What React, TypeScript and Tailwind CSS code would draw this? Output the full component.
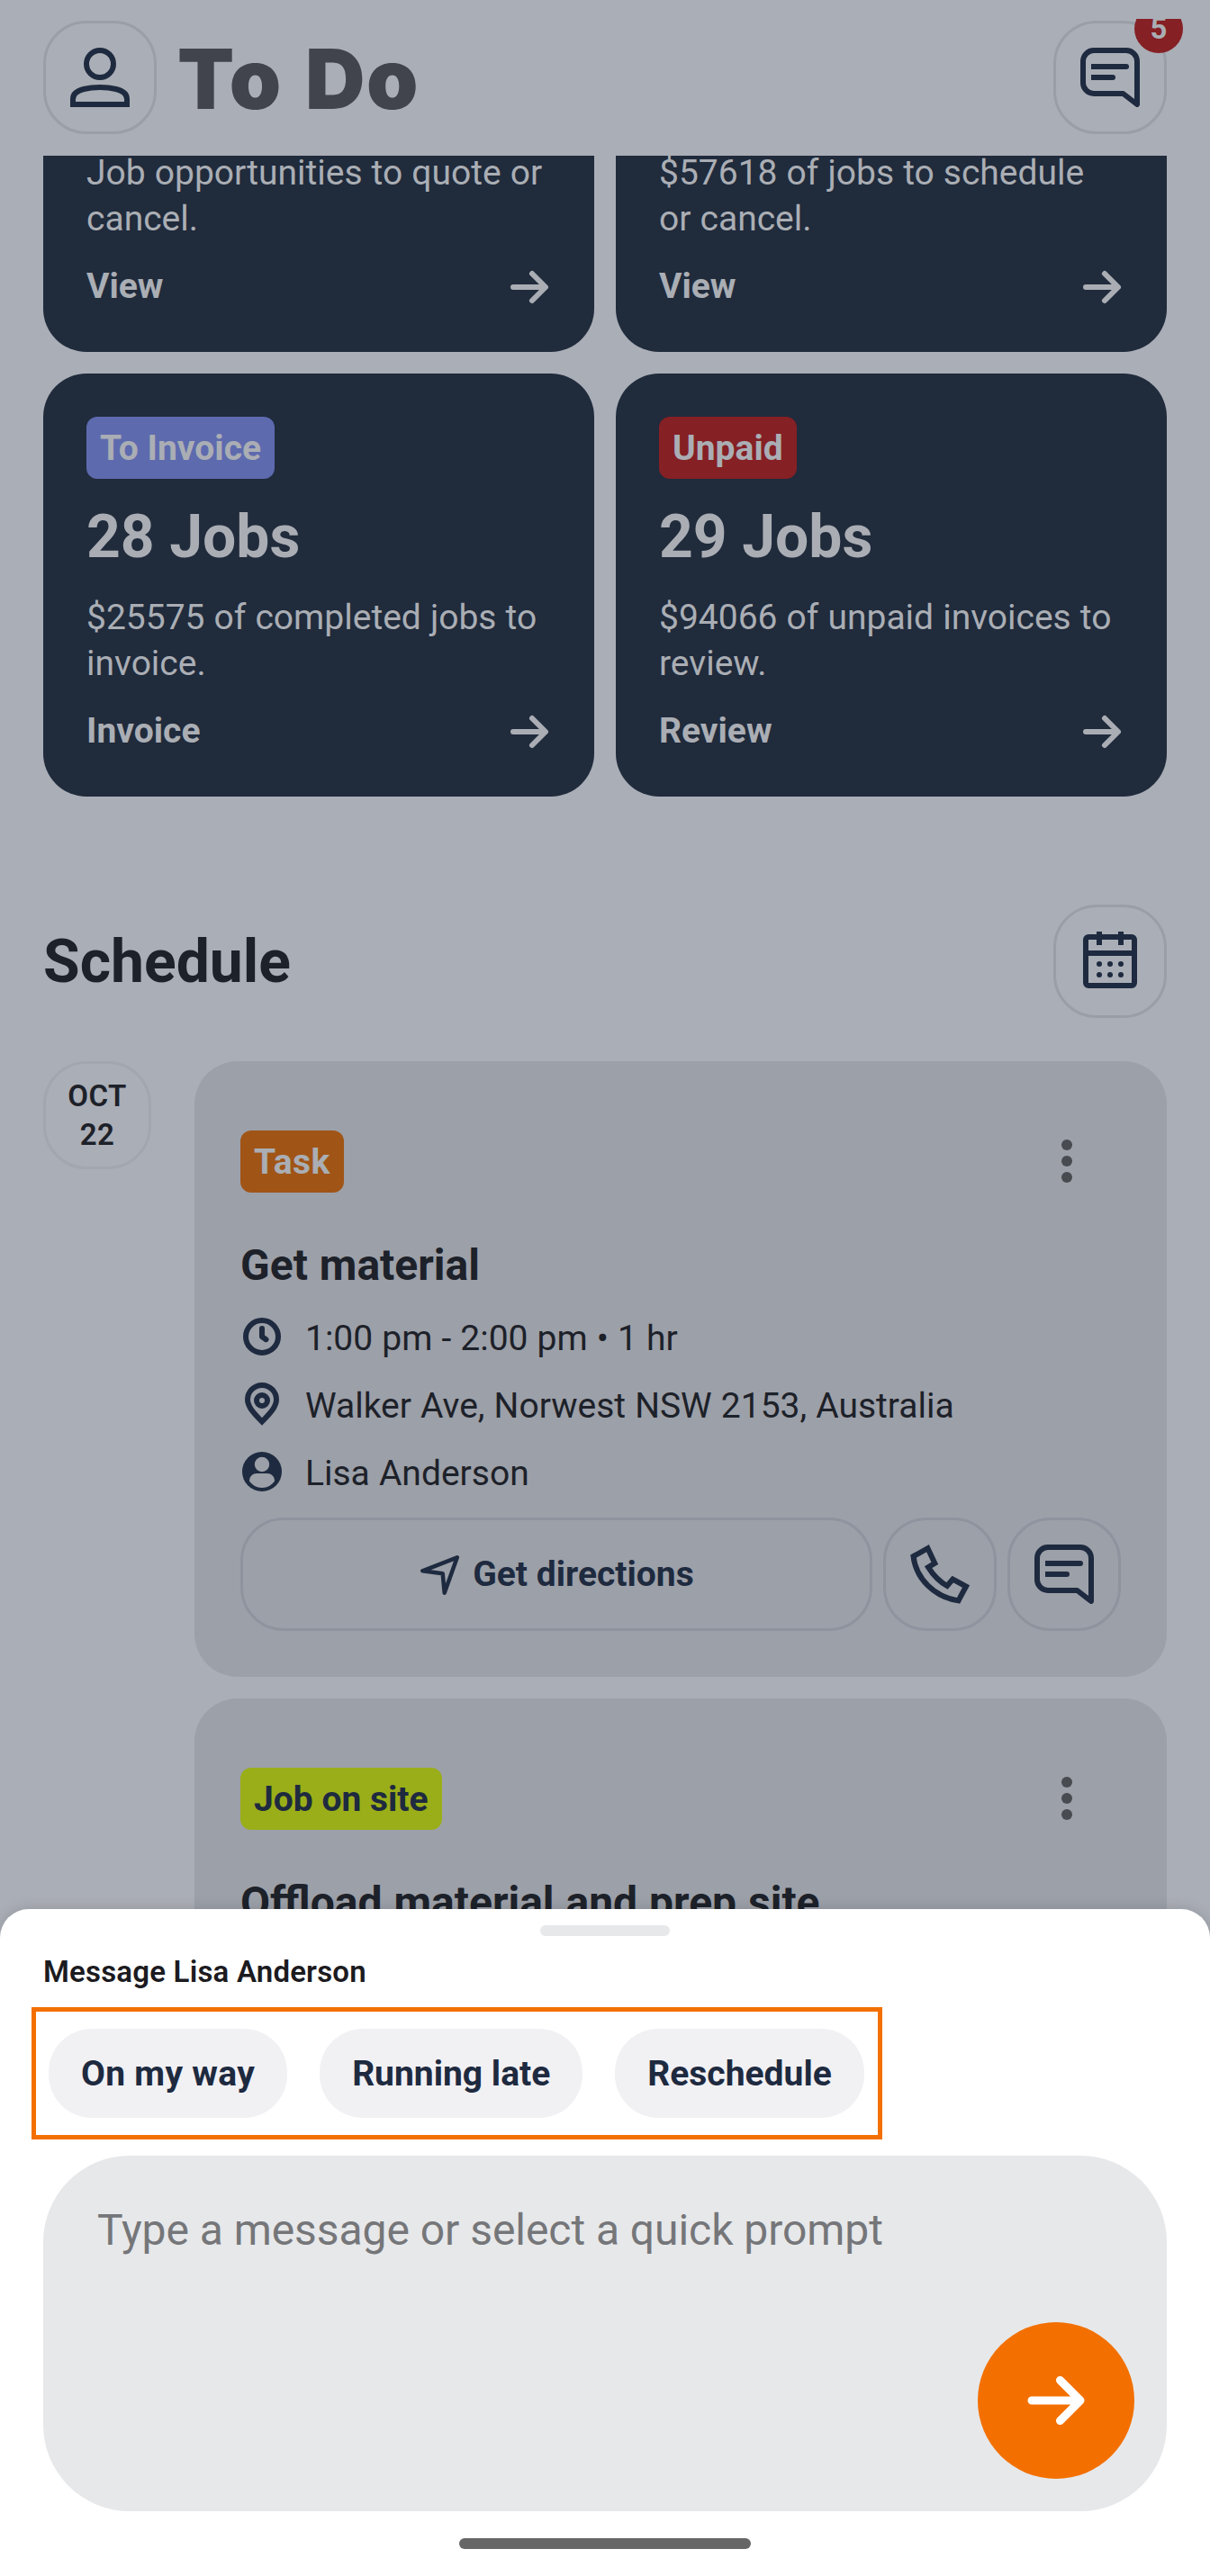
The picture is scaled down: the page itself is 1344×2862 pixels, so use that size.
import type { ReactNode } from "react";

function ArrowRight({ className }: { className: string }) {
  return (
    <svg viewBox="0 0 48 48" className={className} fill="none" stroke="currentColor" strokeWidth="6" strokeLinecap="round" strokeLinejoin="round">
      <path d="M6 24H41M27 9L42 24L27 39" />
    </svg>
  );
}

function PersonIcon() {
  return (
    <svg viewBox="0 0 66 66" className="size-[66px]" fill="none" stroke="currentColor" strokeWidth="6">
      <circle cx="33" cy="18" r="15" />
      <path d="M3 63V57C3 50.500 9 47.500 15 46C21 44.500 27 44 33 44C39 44 45 44.500 51 46C57 47.500 63 50.500 63 57V63Z" />
    </svg>
  );
}

function MessageIcon() {
  return (
    <svg viewBox="0 0 66 66" className="size-[66px]" fill="none" stroke="currentColor" strokeWidth="6">
      <path strokeLinejoin="round" d="M63 63V15A12 12 0 0 0 51 3H15A12 12 0 0 0 3 15V39A12 12 0 0 0 15 51H47.500Z" />
      <path d="M12 21H51M12 33H36" />
      <path strokeLinecap="round" d="M48 21H51M33 33H36" />
    </svg>
  );
}

function PhoneIcon() {
  return (
    <svg viewBox="0 0 66 66" className="size-[66px]" fill="none" stroke="currentColor" strokeWidth="6">
      <path d="M3.500 13.200L19.500 4.200L27.300 20.800L20 25.200C25.500 34 32 41 41 46L47.300 38.600L62 46.500L53.500 62.400C27 58.500 6.500 38 3.500 13.200Z" />
    </svg>
  );
}

function CalendarIcon() {
  return (
    <svg viewBox="0 0 60 63" className="-mt-[3px] h-[63px] w-[60px]" fill="none" stroke="currentColor" strokeWidth="6">
      <rect x="3" y="6" width="54" height="54" rx="3" />
      <path d="M3 24H57M18 0V15M42 0V15" />
      <g fill="currentColor" stroke="none">
        {[36, 48].map((y) => [18, 30, 42].map((x) => <circle key={`${x}-${y}`} cx={x} cy={y} r="3" />))}
      </g>
    </svg>
  );
}

function ClockIcon() {
  return (
    <svg viewBox="0 0 48 48" className="size-12" fill="none" stroke="currentColor" strokeWidth="6">
      <circle cx="24" cy="24" r="18" />
      <path d="M24 15V24L28.500 27.200" strokeLinecap="round" strokeLinejoin="round" />
    </svg>
  );
}

function PinIcon() {
  return (
    <svg viewBox="0 0 48 48" className="size-12" fill="none" stroke="currentColor" strokeWidth="6">
      <path d="M24 43.500C15 34 8 27 8 19A16 16 0 0 1 40 19C40 27 33 34 24 43.500Z" />
      <circle cx="24" cy="20" r="6" />
    </svg>
  );
}

function AccountIcon() {
  return (
    <svg viewBox="0 0 48 48" className="size-12">
      <circle cx="24" cy="24" r="22" fill="currentColor" />
      <circle cx="24" cy="16" r="8.200" fill="#9ca0a8" />
      <path fill="#9ca0a8" d="M10 34.500C10 29 14 26 18 26H30C34 26 38 29 38 34.500C35 39 30 42 24 42C18 42 13 39 10 34.500Z" />
    </svg>
  );
}

function DirectionsIcon() {
  return (
    <svg viewBox="0 0 48 48" className="size-12" fill="none" stroke="currentColor" strokeWidth="4.500" strokeLinejoin="round">
      <path d="M42.800 5.300L4.300 20.300L26.700 23.300L28.700 44.700Z" />
    </svg>
  );
}

function RoundButton({ children, className }: { children: ReactNode; className: string }) {
  return (
    <button className={`flex size-[126px] shrink-0 items-center justify-center rounded-[48px] border-3 text-[#1e2a3f] ${className}`}>
      {children}
    </button>
  );
}

function Badge({ label, className }: { label: string; className: string }) {
  return (
    <span className={`flex h-[69px] w-fit items-center rounded-xl px-[15px] pt-0.5 text-[39px] leading-[51px] font-bold ${className}`}>
      {label}
    </span>
  );
}

function CardAction({ label }: { label: string }) {
  return (
    <div className="mt-6 flex h-[51px] items-center justify-between">
      <span className="font-bold">{label}</span>
      <ArrowRight className="mt-px size-12" />
    </div>
  );
}

function ScrolledCard({ children, action }: { children: ReactNode; action: string }) {
  return (
    <article className="h-[218px] rounded-b-[48px] bg-[#202b3c] px-12 text-[39px] leading-[51px] text-[#aaaeb4]">
      <p className="-mt-1.5 [word-spacing:0.4px]">{children}</p>
      <CardAction label={action} />
    </article>
  );
}

function JobCard({ tag, tagClass, count, text, action }: { tag: string; tagClass: string; count: string; text: string; action: string }) {
  return (
    <article className="h-[470px] rounded-[48px] bg-[#202b3c] p-12 text-[39px] leading-[51px] text-[#aaaeb4]">
      <Badge label={tag} className={tagClass} />
      <h2 className="mt-[25px] text-[66px] leading-[79px] font-bold">{count}</h2>
      <p className="mt-[25px] [word-spacing:0.4px]">{text}</p>
      <CardAction label={action} />
    </article>
  );
}

function TaskHeader({ tag, tagClass, title }: { tag: string; tagClass: string; title: string }) {
  return (
    <>
      <div className="flex h-[120px] items-center justify-between">
        <Badge label={tag} className={tagClass} />
        <button className="flex size-[120px] flex-col items-center justify-center gap-1.5">
          <i className="size-3 rounded-full bg-[#484b4f]" />
          <i className="size-3 rounded-full bg-[#484b4f]" />
          <i className="size-3 rounded-full bg-[#484b4f]" />
        </button>
      </div>
      <h3 className="mt-6 text-[48px] leading-[63px] font-bold [word-spacing:1px]">{title}</h3>
    </>
  );
}

function InfoRow({ icon, text }: { icon: ReactNode; text: string }) {
  return (
    <div className="flex h-[51px] items-center gap-6">
      <span className="-mt-[5px] text-[#1e2a3f]">{icon}</span>
      <span className="[word-spacing:0.4px]">{text}</span>
    </div>
  );
}

const prompts = [
  { label: "On my way", tracking: "tracking-[0.3px]" },
  { label: "Running late", tracking: "tracking-normal" },
  { label: "Reschedule", tracking: "tracking-normal" },
];

export default function App() {
  return (
    <div className="relative h-[2862px] w-[1344px] overflow-hidden bg-[#aaaeb6] font-['Roboto',sans-serif] text-[#1d2129]">
      <div className="pt-[21px]">
        <header className="flex h-[152px] items-start justify-between overflow-hidden px-12 pt-0.5">
          <div className="flex items-start gap-[23px]">
            <RoundButton className="border-[#9a9ea7]">
              <PersonIcon />
            </RoundButton>
            <h1 className="pt-0.5 font-['Inter',sans-serif] text-[92px] leading-[126px] font-black tracking-[1.7px] text-[#41444d] [word-spacing:5px]">To Do</h1>
          </div>
          <div className="relative">
            <RoundButton className="border-[#9a9ea7]">
              <MessageIcon />
            </RoundButton>
            <span className="absolute -top-[18px] -right-[18px] flex size-[54px] items-center justify-center rounded-full bg-[#852025] text-[33px] font-bold text-[#aaaeb4]">
              5
            </span>
          </div>
        </header>

        <main className="px-12">
          <section className="grid grid-cols-2 gap-6">
            <ScrolledCard action="View">Job opportunities to quote or cancel.</ScrolledCard>
            <ScrolledCard action="View">
              $57618 of jobs to schedule
              <br />
              or cancel.
            </ScrolledCard>
            <JobCard tag="To Invoice" tagClass="bg-[#5e6aae] text-[#aaaeb4]" count="28 Jobs" text="$25575 of completed jobs to invoice." action="Invoice" />
            <JobCard tag="Unpaid" tagClass="bg-[#852025] text-[#aaaeb4]" count="29 Jobs" text="$94066 of unpaid invoices to review." action="Review" />
          </section>

          <section className="mt-[120px]">
            <div className="flex items-center justify-between">
              <h2 className="pt-0.5 text-[66px] leading-[78px] font-bold">Schedule</h2>
              <RoundButton className="border-[#9a9ea7]">
                <CalendarIcon />
              </RoundButton>
            </div>

            <div className="mt-12 flex items-start gap-12">
              <div className="flex size-[120px] shrink-0 flex-col items-center rounded-[48px] border-3 border-[#a2a6ae] pt-[14px] text-[33px] leading-[43px] font-semibold tracking-[0.4px]">
                <span>OCT</span>
                <span>22</span>
              </div>

              <div className="flex flex-1 flex-col gap-6">
                <article className="h-[684px] rounded-[48px] bg-[#9ca0a8] p-[51px]">
                  <TaskHeader tag="Task" tagClass="bg-[#a05517] text-[#aaaeb4] tracking-[0.4px]" title="Get material" />
                  <div className="mt-[25px] flex flex-col gap-6 text-[39px] leading-[51px]">
                    <InfoRow icon={<ClockIcon />} text="1:00 pm - 2:00 pm • 1 hr" />
                    <InfoRow icon={<PinIcon />} text="Walker Ave, Norwest NSW 2153, Australia" />
                    <InfoRow icon={<AccountIcon />} text="Lisa Anderson" />
                  </div>
                  <div className="mt-[23px] flex gap-3">
                    <button className="flex h-[126px] flex-1 items-center justify-center gap-3 rounded-[48px] border-3 border-[#8f939e] text-[39px] font-bold text-[#1e2a3f]">
                      <DirectionsIcon />
                      Get directions
                    </button>
                    <RoundButton className="border-[#8f939e]">
                      <PhoneIcon />
                    </RoundButton>
                    <RoundButton className="border-[#8f939e]">
                      <MessageIcon />
                    </RoundButton>
                  </div>
                </article>

                <article className="h-[684px] rounded-[48px] bg-[#9ca0a8] p-[51px]">
                  <TaskHeader tag="Job on site" tagClass="bg-[#9aae19] text-[#1e2a3f]" title="Offload material and prep site" />
                </article>
              </div>
            </div>
          </section>
        </main>
      </div>

      <section className="absolute inset-x-0 bottom-0 h-[741px] rounded-t-[32px] bg-white pt-[18px] shadow-[0_0_16px_rgba(0,0,0,0.15)]">
        <div className="mx-auto h-3 w-36 rounded-full bg-[#e7e8ea]" />
        <h4 className="mt-[18px] ml-12 text-[33px] leading-[43px] font-semibold tracking-[0.2px] text-[#1c1b1f]">Message Lisa Anderson</h4>
        <div className="mt-[18px] ml-[35px] flex h-[147px] w-[945px] items-center gap-9 border-5 border-[#f37000] pl-[14px]">
          {prompts.map(({ label, tracking }) => (
            <button key={label} className={`h-[99px] shrink-0 rounded-[48px] bg-[#f1f1f4] px-9 pt-0.5 text-[39px] font-bold text-[#1e2a3f] ${tracking}`}>
              {label}
            </button>
          ))}
        </div>
        <div className="mx-12 mt-[18px] flex h-[395px] flex-col justify-between rounded-[96px] bg-[#e7e8ea] pt-[50px] pr-9 pb-9 pl-[60px]">
          <p className="text-[48px] leading-[66px] tracking-[-0.05px] text-[#757679]">Type a message or select a quick prompt</p>
          <button className="flex size-[174px] items-center justify-center self-end rounded-full bg-[#f37000] text-white">
            <ArrowRight className="size-[72px]" />
          </button>
        </div>
        <div className="mx-auto mt-[30px] h-3 w-[324px] rounded-full bg-[#666666]" />
      </section>
    </div>
  );
}
